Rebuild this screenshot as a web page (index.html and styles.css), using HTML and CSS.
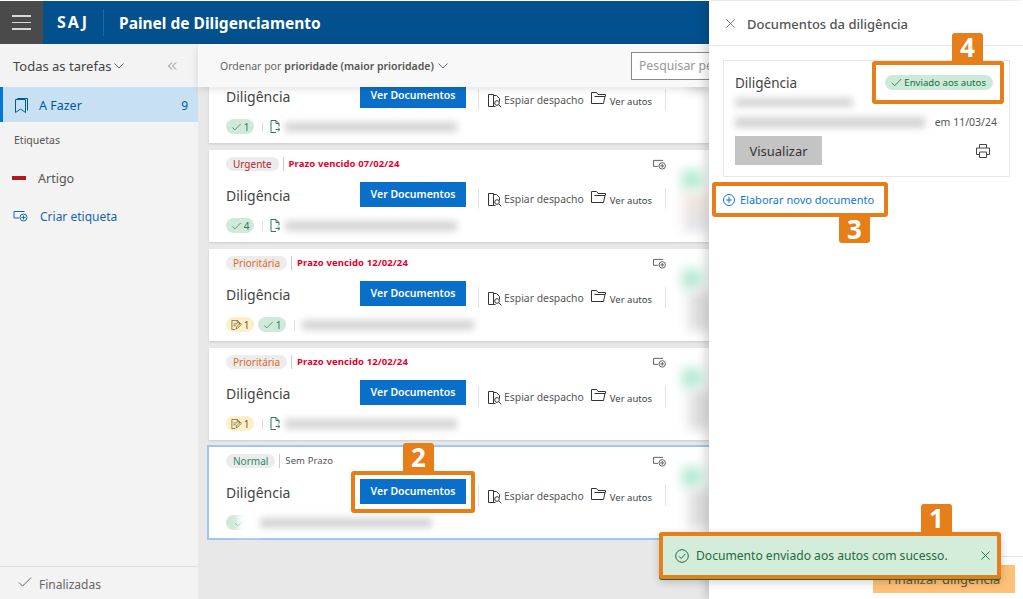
FILE: index.html
```html
<!DOCTYPE html>
<html lang="pt-BR">
<head>
  <meta charset="UTF-8">
  <title>Painel de Diligenciamento</title>
  <link rel="stylesheet" href="styles.css">
</head>
<body>
  <svg class="sprite" width="0" height="0">
    <symbol id="i-check" viewBox="0 0 14 14"><path d="M1 7.5l3.6 3.6L13 2.6" fill="none" stroke="currentColor"/></symbol>
    <symbol id="i-newtab" viewBox="0 0 14 12"><path d="M11 1.5H.5v6.5h5M12 2.5" fill="none" stroke="currentColor"/><circle cx="10" cy="7.5" r="3.5" fill="none" stroke="currentColor"/><path d="M8 7.5h4M10 5.5v4" fill="none" stroke="currentColor"/></symbol>
    <symbol id="i-spy" viewBox="0 0 14 15"><path d="M.5 1.5h5v12h-5zM5.500 2.500h3l3 3v3M5.500 13.500h2" fill="none" stroke="currentColor"/><circle cx="9" cy="10" r="2.300" fill="none" stroke="currentColor"/><path d="M10.800 11.800l2.500 2.500" fill="none" stroke="currentColor"/></symbol>
    <symbol id="i-folder" viewBox="0 0 15 12"><path d="M.5 11.500V.5h5l1.500 2h7.500v2M.5 11.500h12l1.500-7H3.500" fill="none" stroke="currentColor"/></symbol>
    <symbol id="i-doc" viewBox="0 0 10 13"><path d="M6 12.500H1V.5h5l3 3v3M6 .5v3h3M5.500 9.500h4M8 7.500l2 2-2 2" fill="none" stroke="currentColor"/></symbol>
    <symbol id="i-edit" viewBox="0 0 13 13"><path d="M5 12.500H.5V.5h7l3 3v2M7.500 .5v3h3M2.500 5h5M2.500 7.500h3M6 11.500l.5-2.500 5-5 1.500 1.500-5 5z" fill="none" stroke="currentColor"/></symbol>
    <symbol id="i-chev" viewBox="0 0 10 6"><path d="M.5.5L5 5l4.500-4.500" fill="none" stroke="currentColor"/></symbol>
    <symbol id="i-close" viewBox="0 0 10 10"><path d="M.5.5l9 9M9.500.5l-9 9" fill="none" stroke="currentColor"/></symbol>
  </svg>

  <div class="app">
    <div class="workspace">
      <header class="topbar">
        <button class="menu-btn" aria-label="Menu"><span></span><span></span><span></span></button>
        <span class="brand">SAJ</span>
        <h1 class="app-title">Painel de Diligenciamento</h1>
      </header>

      <div class="content">
        <aside class="sidebar">
          <div class="side-head">
            <span class="side-title">Todas as tarefas</span>
            <svg class="side-chev"><use href="#i-chev"/></svg>
            <svg class="side-collapse" viewBox="0 0 9 8"><path d="M4 .5L.5 4 4 7.500M8 .5L4.500 4 8 7.500" fill="none" stroke="currentColor" stroke-width=".8"/></svg>
          </div>
          <a class="side-item active">
            <svg class="side-icon" viewBox="0 0 13 15"><path d="M2.500 1.500V.5h10v12M.5 1.500h10v13l-5-3.500-5 3.500z" fill="none" stroke="currentColor"/></svg>
            <span class="side-label">A Fazer</span>
            <span class="side-count">9</span>
          </a>
          <div class="side-section">Etiquetas</div>
          <a class="side-item tag-item"><span class="tag-mark"></span>Artigo</a>
          <a class="side-item new-tag">
            <svg class="new-tag-icon"><use href="#i-newtab"/></svg>
            Criar etiqueta
          </a>
          <a class="side-done">
            <svg class="done-icon"><use href="#i-check"/></svg>
            Finalizadas
          </a>
        </aside>

        <main class="main">
          <div class="toolbar">
            <div class="sort"><span>Ordenar por</span><b>prioridade (maior prioridade)</b></div>
            <svg class="sort-chev"><use href="#i-chev"/></svg>
            <div class="search">Pesquisar pe</div>
          </div>

          <div class="list">
            <div class="list-inner">
              <article class="card">
                <div class="card-body">
                  <div class="card-top">
                    <span class="pill pill-urgent">Urgente</span>
                    <span class="deadline late">Prazo vencido 05/02/24</span>
                    <svg class="card-flag"><use href="#i-newtab"/></svg>
                  </div>
                  <div class="card-mid">
                    <h2 class="card-title">Diligência</h2>
                    <button class="btn-primary">Ver Documentos</button>
                    <div class="card-actions">
                      <span class="action"><svg class="spy"><use href="#i-spy"/></svg>Espiar despacho</span>
                      <span class="action small"><svg class="folder"><use href="#i-folder"/></svg>Ver autos</span>
                    </div>
                  </div>
                  <div class="card-foot">
                    <span class="count count-ok"><svg><use href="#i-check"/></svg>1</span>
                    <span class="foot-sep"></span>
                    <svg class="foot-doc"><use href="#i-doc"/></svg>
                    <span class="smudge wide"></span>
                  </div>
                </div>
                <div class="card-side first"><span class="blob gray"></span></div>
              </article>

              <article class="card">
                <div class="card-body">
                  <div class="card-top">
                    <span class="pill pill-urgent">Urgente</span>
                    <span class="deadline late">Prazo vencido 07/02/24</span>
                    <svg class="card-flag"><use href="#i-newtab"/></svg>
                  </div>
                  <div class="card-mid">
                    <h2 class="card-title">Diligência</h2>
                    <button class="btn-primary">Ver Documentos</button>
                    <div class="card-actions">
                      <span class="action"><svg class="spy"><use href="#i-spy"/></svg>Espiar despacho</span>
                      <span class="action small"><svg class="folder"><use href="#i-folder"/></svg>Ver autos</span>
                    </div>
                  </div>
                  <div class="card-foot">
                    <span class="count count-ok"><svg><use href="#i-check"/></svg>4</span>
                    <span class="foot-sep"></span>
                    <svg class="foot-doc"><use href="#i-doc"/></svg>
                    <span class="smudge wide"></span>
                  </div>
                </div>
                <div class="card-side"><span class="blob green"></span><span class="blob tan"></span></div>
              </article>

              <article class="card">
                <div class="card-body">
                  <div class="card-top">
                    <span class="pill pill-high">Prioritária</span>
                    <span class="deadline late">Prazo vencido 12/02/24</span>
                    <svg class="card-flag"><use href="#i-newtab"/></svg>
                  </div>
                  <div class="card-mid">
                    <h2 class="card-title">Diligência</h2>
                    <button class="btn-primary">Ver Documentos</button>
                    <div class="card-actions">
                      <span class="action"><svg class="spy"><use href="#i-spy"/></svg>Espiar despacho</span>
                      <span class="action small"><svg class="folder"><use href="#i-folder"/></svg>Ver autos</span>
                    </div>
                  </div>
                  <div class="card-foot">
                    <span class="count count-edit"><svg><use href="#i-edit"/></svg>1</span>
                    <span class="count count-ok"><svg><use href="#i-check"/></svg>1</span>
                    <span class="foot-sep"></span>
                    <span class="smudge wide"></span>
                  </div>
                </div>
                <div class="card-side"><span class="blob green"></span><span class="blob gray"></span></div>
              </article>

              <article class="card">
                <div class="card-body">
                  <div class="card-top">
                    <span class="pill pill-high">Prioritária</span>
                    <span class="deadline late">Prazo vencido 12/02/24</span>
                    <svg class="card-flag"><use href="#i-newtab"/></svg>
                  </div>
                  <div class="card-mid">
                    <h2 class="card-title">Diligência</h2>
                    <button class="btn-primary">Ver Documentos</button>
                    <div class="card-actions">
                      <span class="action"><svg class="spy"><use href="#i-spy"/></svg>Espiar despacho</span>
                      <span class="action small"><svg class="folder"><use href="#i-folder"/></svg>Ver autos</span>
                    </div>
                  </div>
                  <div class="card-foot">
                    <span class="count count-edit"><svg><use href="#i-edit"/></svg>1</span>
                    <span class="foot-sep"></span>
                    <svg class="foot-doc"><use href="#i-doc"/></svg>
                    <span class="smudge wide"></span>
                  </div>
                </div>
                <div class="card-side"><span class="blob green"></span><span class="blob gray"></span></div>
              </article>

              <article class="card selected">
                <div class="card-body">
                  <div class="card-top">
                    <span class="pill pill-normal">Normal</span>
                    <span class="deadline">Sem Prazo</span>
                    <svg class="card-flag"><use href="#i-newtab"/></svg>
                  </div>
                  <div class="card-mid">
                    <h2 class="card-title">Diligência</h2>
                    <button class="btn-primary">Ver Documentos</button>
                    <div class="card-actions">
                      <span class="action"><svg class="spy"><use href="#i-spy"/></svg>Espiar despacho</span>
                      <span class="action small"><svg class="folder"><use href="#i-folder"/></svg>Ver autos</span>
                    </div>
                  </div>
                  <div class="card-foot">
                    <span class="count count-ok"><svg><use href="#i-check"/></svg></span>
                    <span class="haze"></span>
                    <span class="smudge wide"></span>
                  </div>
                </div>
                <div class="card-side"><span class="blob green"></span><span class="blob gray"></span></div>
              </article>
            </div>
          </div>
        </main>
      </div>
    </div>

    <aside class="panel">
      <div class="panel-head">
        <svg class="panel-close"><use href="#i-close"/></svg>
        <h2 class="panel-title">Documentos da diligência</h2>
      </div>
      <div class="panel-body">
        <div class="doc-card">
          <div class="doc-top">
            <h3 class="doc-title">Diligência</h3>
            <span class="status"><svg><use href="#i-check"/></svg>Enviado aos autos</span>
          </div>
          <span class="smudge doc-line"></span>
          <div class="doc-meta"><span class="smudge doc-author"></span><span class="doc-date">em 11/03/24</span></div>
          <div class="doc-actions">
            <button class="btn-view">Visualizar</button>
            <svg class="print" viewBox="0 0 14 14"><path d="M3.500 4V.5h7V4M3.500 10.500H.5V4h13v6.500h-3M3.500 8h7v5.500h-7z" fill="none" stroke="currentColor"/></svg>
          </div>
        </div>
        <a class="new-doc">
          <svg viewBox="0 0 12 12"><circle cx="6" cy="6" r="5.500" fill="none" stroke="currentColor"/><path d="M3 6h6M6 3v6" fill="none" stroke="currentColor"/></svg>
          Elaborar novo documento
        </a>
      </div>
      <div class="panel-foot">
        <button class="btn-finish">Finalizar diligência</button>
      </div>
    </aside>
  </div>

  <!-- marcações do tutorial -->
  <div class="callout c2"><span class="callout-num">2</span></div>
  <div class="callout c3"><span class="callout-num below">3</span></div>
  <div class="callout c4"><span class="callout-num">4</span></div>
  <div class="callout toast">
    <span class="callout-num">1</span>
    <svg class="toast-icon" viewBox="0 0 14 14"><circle cx="7" cy="7" r="6.300" fill="none" stroke="currentColor"/><path d="M4 7.300l2.200 2.200L10.200 5" fill="none" stroke="currentColor"/></svg>
    <span class="toast-text">Documento enviado aos autos com sucesso.</span>
    <svg class="toast-close"><use href="#i-close"/></svg>
  </div>
</body>
</html>
```

FILE: styles.css
```css
* {
  box-sizing: border-box;
}

html, body {
  margin: 0;
  height: 100%;
  overflow: hidden;
}

body {
  font-family: "Noto Sans", "Open Sans", sans-serif;
  background: #fff;
  color: #333;
  padding-top: 1px;
}

.sprite {
  position: absolute;
}

svg {
  display: block;
}

button {
  font-family: inherit;
  border: none;
  padding: 0;
}

.app {
  display: flex;
  height: 598px;
}

.workspace {
  width: 709px;
  display: flex;
  flex-direction: column;
  flex-shrink: 0;
}

/* barra superior */
.topbar {
  height: 43px;
  background: #03508e;
  display: flex;
  align-items: center;
  color: white;
}

.menu-btn {
  width: 43px;
  height: 43px;
  background: #4a4a4a;
  display: flex;
  flex-direction: column;
  justify-content: center;
  align-items: center;
  gap: 5px;
}

.menu-btn span {
  width: 19px;
  height: 1.500px;
  background: #d8d8d8;
}

.brand {
  margin-left: 14px;
  width: 47px;
  font-size: 16px;
  font-weight: 700;
  letter-spacing: 2px;
  line-height: 27px;
  border-right: 1px solid #1a69a8;
  height: 27px;
}

.app-title {
  margin: 0 0 0 15px;
  font-size: 15.500px;
  font-weight: 700;
}

.content {
  flex: 1;
  display: flex;
  min-height: 0;
}

/* menu lateral */
.sidebar {
  width: 198px;
  background: #f3f3f3;
  display: flex;
  flex-direction: column;
  flex-shrink: 0;
}

.side-head {
  height: 43px;
  display: flex;
  align-items: center;
  padding-left: 13px;
}

.side-title {
  font-size: 13px;
  color: #444;
}

.side-chev {
  width: 10px;
  height: 6px;
  margin-left: 3px;
  color: #666;
}

.side-collapse {
  width: 9px;
  height: 8px;
  margin-left: 44px;
  color: #666;
}

.side-item {
  display: flex;
  align-items: center;
  font-size: 12.500px;
}

.side-item.active {
  height: 35px;
  background: #c7e0f4;
  border-left: 3px solid #0078d4;
  color: #005a9e;
  padding: 2px 0 0 12px;
}

.side-icon {
  width: 13px;
  height: 15px;
}

.side-label {
  margin-left: 11px;
  flex: 1;
}

.side-count {
  margin-right: 10px;
  font-size: 12px;
}

.side-section {
  font-size: 10.500px;
  color: #555;
  margin: 11px 0 0 14px;
  line-height: 15px;
}

.tag-item {
  margin-top: 20px;
  padding-left: 12px;
  color: #555;
  height: 20px;
}

.tag-mark {
  width: 14px;
  height: 4px;
  background: #b5161b;
  margin-right: 12px;
}

.new-tag {
  margin-top: 18px;
  padding-left: 13px;
  height: 20px;
  font-size: 12px;
  color: #1666ad;
}

.new-tag-icon {
  width: 15px;
  height: 12px;
  margin-right: 12px;
}

.side-done {
  margin-top: auto;
  height: 33px;
  border-top: 1px solid #ddd;
  display: flex;
  align-items: center;
  padding: 2px 0 0 18px;
  font-size: 12px;
  color: #666;
}

.done-icon {
  width: 14px;
  height: 14px;
  margin-right: 7px;
  margin-top: -4px;
}

/* lista de tarefas */
.main {
  flex: 1;
  min-width: 0;
  background: #e8e8e8;
  display: flex;
  flex-direction: column;
}

.toolbar {
  height: 43px;
  background: #f8f8f8;
  box-shadow: 0 2px 8px rgba(0,0,0,0.12);
  display: flex;
  align-items: center;
  padding-left: 22px;
  position: relative;
  z-index: 1;
  flex-shrink: 0;
}

.sort {
  display: flex;
  gap: 3px;
  font-size: 10.500px;
  color: #666;
  white-space: nowrap;
  flex-shrink: 0;
}

.sort b {
  font-weight: 600;
  color: #555;
}

.sort-chev {
  width: 10px;
  height: 6px;
  margin-left: 4px;
  color: #666;
  flex-shrink: 0;
}

.search {
  margin-left: 183px;
  flex: 1;
  height: 28px;
  border: 1px solid #888;
  border-right: none;
  background: #fff;
  font-size: 12.300px;
  color: #999;
  padding-left: 7px;
  line-height: 26px;
  white-space: nowrap;
}

.list {
  flex: 1;
  overflow: hidden;
  min-height: 0;
}

.list-inner {
  margin-top: -36px;
  padding-left: 11px;
  display: flex;
  flex-direction: column;
  gap: 7px;
}

.card {
  height: 92px;
  flex-shrink: 0;
  background: white;
  display: flex;
  box-shadow: 0 1px 2px rgba(0,0,0,0.12);
}

.card.selected {
  height: 91px;
  box-shadow: 0 0 0 2px #9cc8ef;
}

.card-body {
  width: 475px;
  padding: 7px 18px 0 17px;
}

.card-top {
  display: flex;
  align-items: center;
  height: 14px;
}

.pill {
  border-radius: 8px;
  background: #ececec;
  font-size: 10px;
  height: 14px;
  line-height: 15px;
  padding: 0 7px;
  margin-right: 4px;
}

.pill-urgent {
  color: #b5262b;
}

.pill-high {
  color: #df6a2a;
}

.pill-normal {
  color: #2e8a62;
}

.deadline {
  border-left: 1px solid #ccc;
  padding-left: 5px;
  font-size: 9.500px;
  line-height: 14px;
  letter-spacing: 0.100px;
  color: #555;
}

.deadline.late {
  color: #e4002b;
  font-weight: 700;
}

.card-flag {
  width: 13px;
  height: 11px;
  margin-left: auto;
  color: #555;
}

.card-mid {
  margin-top: 11px;
  display: flex;
  height: 25px;
}

.card-title {
  width: 134px;
  margin: 0;
  font-size: 14px;
  font-weight: 400;
  color: #444;
  line-height: 28px;
  flex-shrink: 0;
}

.btn-primary {
  width: 106px;
  height: 25px;
  background: #0a6fc9;
  color: white;
  font-size: 10.500px;
  font-weight: 600;
  padding-bottom: 2px;
  flex-shrink: 0;
}

.card-actions {
  margin: 6px 0 0 12px;
  height: 21px;
  width: 188px;
  padding-left: 9px;
  border-left: 1px solid #e2e2e2;
  border-right: 1px solid #e2e2e2;
  display: flex;
  align-items: center;
  gap: 7px;
  flex-shrink: 0;
}

.action {
  display: flex;
  align-items: center;
  font-size: 10.400px;
  color: #555;
  white-space: nowrap;
  padding-top: 1px;
}

.action.small {
  font-size: 9.500px;
  color: #444;
  padding-top: 4px;
}

.spy {
  width: 14px;
  height: 15px;
  margin-right: 2px;
  color: #333;
}

.folder {
  width: 15px;
  height: 12px;
  margin: -8px 4px 0 0;
  color: #333;
}

.card-foot {
  margin-top: 11px;
  display: flex;
  align-items: center;
  height: 15px;
}

.count {
  display: flex;
  align-items: center;
  justify-content: center;
  min-width: 28px;
  height: 15px;
  padding: 0 4px;
  border-radius: 8px;
  font-size: 10px;
  margin-right: 4px;
}

.count svg {
  width: 11px;
  height: 10px;
  margin-right: 2px;
}

.count-ok {
  background: #cfeadb;
  color: #2a7a55;
}

.count-edit {
  background: #fdefc8;
  color: #6b5a2c;
}

.foot-sep {
  width: 1px;
  height: 10px;
  background: #ddd;
  margin: 0 7px 0 4px;
}

.foot-doc {
  width: 10px;
  height: 13px;
  color: #2a7a55;
  margin-right: 5px;
}

.smudge {
  display: block;
  background: #d4d4d4;
  filter: blur(3.500px);
}

.smudge.wide {
  width: 172px;
  height: 10px;
}

/* trecho borrado sobre o contador do card selecionado */
.haze {
  width: 24px;
  height: 24px;
  margin: 0 -2px 0 -20px;
  background: #fff;
  filter: blur(3px);
}

.card-side {
  flex: 1;
  display: flex;
  flex-direction: column;
  gap: 2px;
  padding-top: 20px;
}

.card-side.first {
  padding-top: 0;
}

.blob {
  display: block;
  filter: blur(6px);
}

.blob.gray {
  background: #dcdcdc;
  height: 40px;
  width: 22px;
  margin-left: 5px;
}

.blob.green {
  background: #b4ead2;
  height: 20px;
  width: 20px;
  margin-left: -2px;
}

.blob.tan {
  background: linear-gradient(#f0e6d8, #e2e2ec);
  height: 40px;
  width: 26px;
}

/* painel de documentos */
.panel {
  flex: 1;
  background: white;
  box-shadow: -3px 0 10px rgba(0,0,0,0.18);
  display: flex;
  flex-direction: column;
  position: relative;
  z-index: 2;
}

.panel-head {
  height: 45px;
  border-bottom: 1px solid #e6e6e6;
  display: flex;
  align-items: center;
  padding: 1px 0 0 17px;
  flex-shrink: 0;
}

.panel-close {
  width: 9px;
  height: 9px;
  color: #666;
}

.panel-title {
  margin: 0 0 0 12px;
  font-size: 13px;
  font-weight: 500;
  color: #555;
}

.panel-body {
  flex: 1;
  padding: 14px 13px 0 14px;
}

.doc-card {
  height: 117px;
  border: 1px solid #e8e8e8;
  padding: 12px 12px 0 11px;
}

.doc-top {
  display: flex;
  justify-content: space-between;
  align-items: flex-start;
  height: 22px;
}

.doc-title {
  margin: 0;
  font-size: 13.500px;
  font-weight: 400;
  color: #444;
  line-height: 20px;
}

.status {
  display: flex;
  align-items: center;
  height: 15px;
  margin: 2px 4px 0 0;
  padding: 0 7px 0 6px;
  border-radius: 8px;
  background: #cbead7;
  color: #1e6b42;
  font-size: 9.600px;
  white-space: nowrap;
}

.status svg {
  width: 11px;
  height: 11px;
  margin-right: 2px;
}

.doc-line {
  width: 118px;
  height: 9px;
  margin-top: 3px;
}

.doc-meta {
  display: flex;
  align-items: center;
  justify-content: space-between;
  margin-top: 8px;
  height: 14px;
}

.doc-author {
  width: 190px;
  height: 11px;
}

.doc-date {
  font-size: 10.500px;
  color: #555;
}

.doc-actions {
  display: flex;
  justify-content: space-between;
  align-items: center;
  margin-top: 7px;
}

.btn-view {
  width: 87px;
  height: 29px;
  background: #c4c4c4;
  color: #333;
  font-size: 13px;
}

.print {
  width: 14px;
  height: 14px;
  margin-right: 7px;
  color: #444;
}

.new-doc {
  display: flex;
  align-items: center;
  margin-top: 15px;
  font-size: 11px;
  color: #0f78d4;
}

.new-doc svg {
  width: 12px;
  height: 12px;
  margin-right: 5px;
}

.panel-foot {
  height: 43px;
  border-top: 1px solid #e6e6e6;
  padding: 8px 8px 0 0;
  display: flex;
  justify-content: flex-end;
  flex-shrink: 0;
}

.btn-finish {
  width: 142px;
  height: 28px;
  background: #ffc078;
  color: #6a5335;
  font-size: 13px;
}

/* marcações */
.callout {
  position: absolute;
  border: 4px solid #e67e19;
  border-radius: 3px;
  z-index: 5;
}

.callout-num {
  position: absolute;
  top: -32px;
  right: 0;
  width: 31px;
  height: 28px;
  background: #e67e19;
  border-radius: 3px 3px 0 0;
  color: white;
  font-size: 26px;
  font-weight: 700;
  line-height: 28px;
  text-align: center;
}

.callout-num.below {
  top: auto;
  bottom: -30px;
  height: 26px;
  border-radius: 0 0 3px 3px;
  line-height: 25px;
  right: 14px;
}

.c2 {
  left: 351px;
  top: 471px;
  width: 124px;
  height: 42px;
}

.c2 .callout-num {
  right: 37px;
}

.c3 {
  left: 712px;
  top: 182px;
  width: 176px;
  height: 35px;
}

.c4 {
  left: 872px;
  top: 61px;
  width: 132px;
  height: 43px;
}

.c4 .callout-num {
  right: 17px;
}

.toast {
  left: 659px;
  top: 532px;
  width: 342px;
  height: 47px;
  background: #d4ecda;
  color: #1e6b42;
  display: flex;
  align-items: center;
  padding: 0 7px 0 12px;
  box-shadow: 0 1px 0 #1a6b3c, 0 3px 8px rgba(0,0,0,0.2);
}

.toast .callout-num {
  right: 45px;
}

.toast-icon {
  width: 14px;
  height: 14px;
  margin-right: 7px;
  flex-shrink: 0;
}

.toast-text {
  font-size: 12.100px;
  flex: 1;
  white-space: nowrap;
}

.toast-close {
  width: 9px;
  height: 9px;
}
```
